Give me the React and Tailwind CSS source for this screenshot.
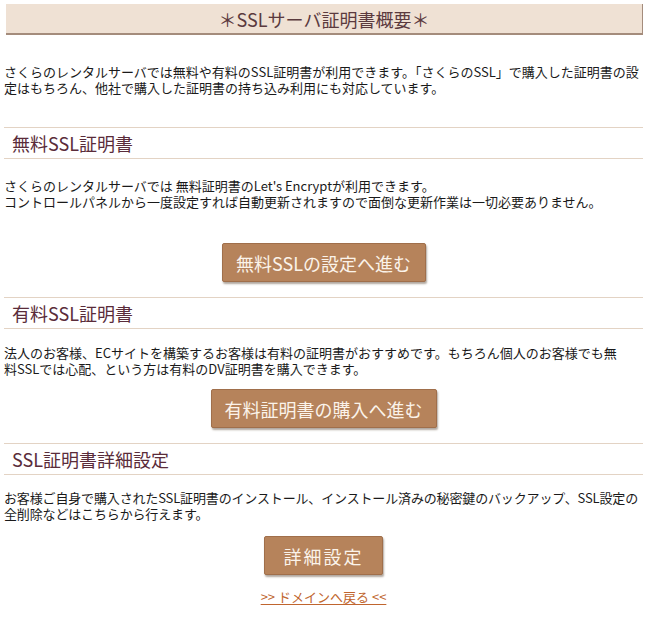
export default function App() {
  const font = { fontFamily: '"Noto Sans CJK JP", "Liberation Sans", sans-serif' };
  return (
    <div className="w-[647px] min-h-[631px] bg-white text-[#1a1a1a] pt-[4px]" style={font}>
      <div className="ml-[6px] mr-[4px] h-[31px] bg-[#efe1d4] border-b-2 border-r border-[#a48c7c] flex items-center justify-center text-[18px] text-[#5b3a3e] leading-none">
        ＊SSLサーバ証明書概要＊
      </div>

      <p className="mt-[29px] px-[4px] text-[13px] leading-[16px]">
        さくらのレンタルサーバでは無料や有料のSSL証明書が利用できます。「さくらのSSL」で購入した証明書の設定はもちろん、他社で購入した証明書の持ち込み利用にも対応しています。
      </p>

      <SectionTitle className="mt-[31px]">無料SSL証明書</SectionTitle>
      <p className="mt-[19px] px-[4px] text-[13px] leading-[16px]">
        さくらのレンタルサーバでは 無料証明書のLet's Encryptが利用できます。
        <br />
        コントロールパネルから一度設定すれば自動更新されますので面倒な更新作業は一切必要ありません。
      </p>
      <div className="mt-[33px] flex justify-center">
        <ActionButton className="w-[204px]">無料SSLの設定へ進む</ActionButton>
      </div>

      <SectionTitle className="mt-[15px]">有料SSL証明書</SectionTitle>
      <p className="mt-[16px] px-[4px] text-[13px] leading-[16px]">
        法人のお客様、ECサイトを構築するお客様は有料の証明書がおすすめです。もちろん個人のお客様でも無
        <br />
        料SSLでは心配、という方は有料のDV証明書を購入できます。
      </p>
      <div className="mt-[12px] flex justify-center">
        <ActionButton className="w-[226px]">有料証明書の購入へ進む</ActionButton>
      </div>

      <SectionTitle className="mt-[15px]">SSL証明書詳細設定</SectionTitle>
      <p className="mt-[15px] pl-[4px] text-[13px] leading-[16px] tracking-[-0.15px]">
        お客様ご自身で購入されたSSL証明書のインストール、インストール済みの秘密鍵のバックアップ、SSL設定の
        <br />
        全削除などはこちらから行えます。
      </p>
      <div className="mt-[14px] flex justify-center">
        <ActionButton className="w-[119px] tracking-[2px]">詳細設定</ActionButton>
      </div>

      <div className="mt-[14px] flex justify-center">
        <a href="#" className="text-[13px] leading-[16px] text-[#c0652e] underline underline-offset-2">
          &gt;&gt; ドメインへ戻る &lt;&lt;
        </a>
      </div>
    </div>
  );
}

function SectionTitle({ children, className = "" }) {
  return (
    <div
      className={`mx-[4px] h-[32px] border-y border-[#e3d3c4] flex items-center pl-[8px] text-[18px] text-[#5a2c3a] leading-none ${className}`}
    >
      {children}
    </div>
  );
}

function ActionButton({ children, className = "" }) {
  return (
    <button
      type="button"
      className={`h-[39px] bg-[#b6835b] border border-[#a06f4b] rounded-[2px] shadow-[1px_2px_2px_rgba(80,60,40,0.45)] text-[18px] text-[#fbf3ea] leading-none flex items-center justify-center ${className}`}
    >
      {children}
    </button>
  );
}
